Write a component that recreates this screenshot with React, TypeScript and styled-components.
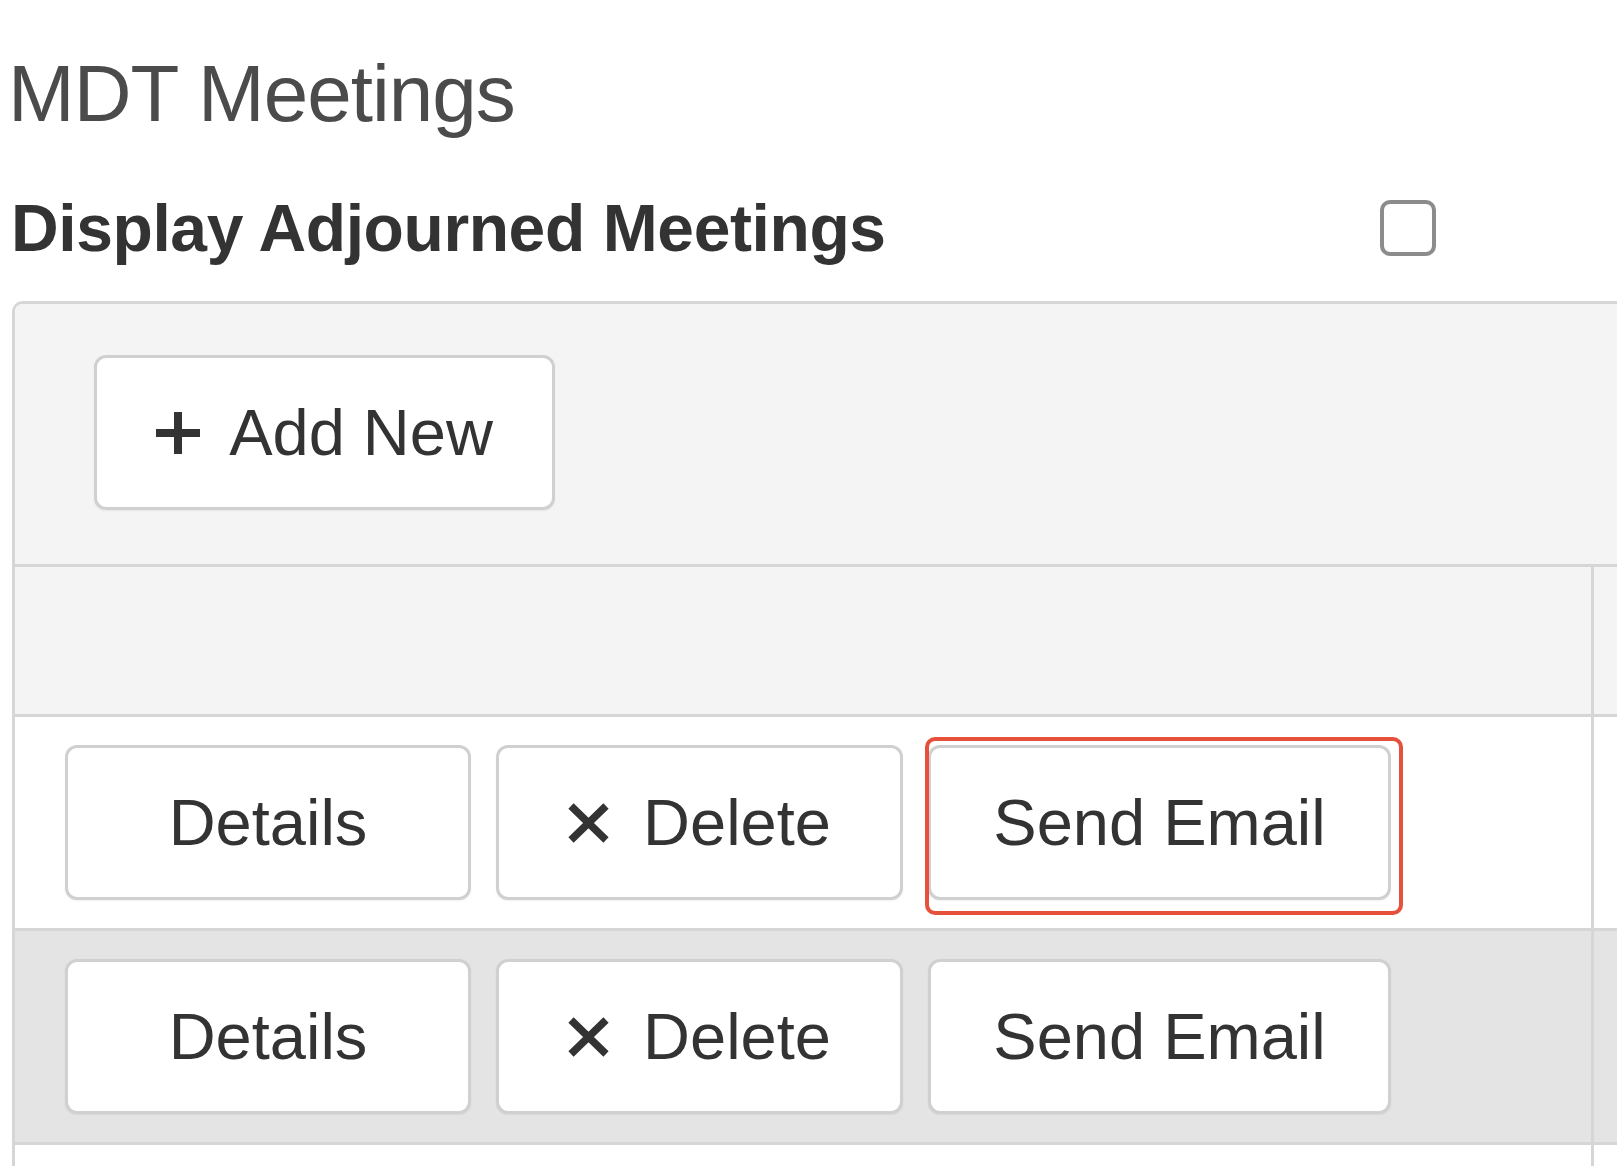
import React from 'react';
import styled, { createGlobalStyle } from 'styled-components';

const lineColor = '#d6d6d6';
const textColor = '#333333';

const GlobalStyle = createGlobalStyle`
  html, body {
    margin: 0;
    padding: 0;
    background: #ffffff;
    overflow: hidden;
  }
  body {
    font-family: "Liberation Sans", Arial, Helvetica, sans-serif;
    color: ${textColor};
  }
`;

const Page = styled.div`
  width: 1617px;
  height: 1166px;
  padding-left: 8px;
  box-sizing: border-box;
  overflow: hidden;
`;

const Title = styled.h1`
  margin: 50px 0 0;
  font-size: 80px;
  font-weight: 400;
  line-height: 88px;
  letter-spacing: -1px;
  color: #4b4b4b;
`;

const OptionRow = styled.div`
  display: grid;
  grid-template-columns: 1372px 56px;
  align-items: center;
  margin-top: 50px;
`;

const OptionLabel = styled.label`
  padding-left: 3px;
  font-size: 66px;
  font-weight: 700;
  line-height: 80px;
  letter-spacing: -0.4px;
  color: ${textColor};
`;

const CheckBox = styled.input`
  appearance: none;
  margin: 0;
  width: 56px;
  height: 56px;
  box-sizing: border-box;
  border: 4px solid #8c8c8c;
  border-radius: 10px;
  background: #ffffff;
`;

const Panel = styled.div`
  margin: 33px 0 0 4px;
  width: 1700px;
  border: 3px solid ${lineColor};
  border-bottom: none;
  border-radius: 11px 11px 0 0;
  overflow: hidden;
`;

const PanelHeading = styled.div`
  display: flex;
  padding: 51px 0 54px 79px;
  background: #f4f4f4;
  border-bottom: 3px solid ${lineColor};
`;

const Row = styled.div<{ $bg?: string; $height?: number }>`
  display: grid;
  grid-template-columns: 1579px 1fr;
  background: ${(p) => p.$bg || '#ffffff'};
  border-bottom: 3px solid ${lineColor};
  height: ${(p) => (p.$height ? `${p.$height}px` : 'auto')};
`;

const Cell = styled.div`
  border-right: 3px solid ${lineColor};
`;

const ActionCell = styled(Cell)`
  display: flex;
  gap: 25px;
  padding: 28px 0 28px 50px;
`;

const Button = styled.button<{ $width: number }>`
  display: inline-flex;
  align-items: center;
  justify-content: center;
  box-sizing: border-box;
  width: ${(p) => p.$width}px;
  height: 155px;
  padding: 0;
  background: #ffffff;
  border: 3px solid #d0d0d0;
  border-radius: 12px;
  box-shadow: 0 1px 2px rgba(0, 0, 0, 0.06);
  font-family: "Liberation Sans", Arial, Helvetica, sans-serif;
  font-size: 65px;
  line-height: 1;
  color: ${textColor};
  cursor: pointer;
`;

const IconBox = styled.svg<{ $gap: number }>`
  flex: none;
  margin-right: ${(p) => p.$gap}px;
`;

const Highlighted = styled.span`
  position: relative;
  display: inline-flex;
`;

const HighlightRing = styled.span`
  position: absolute;
  left: -3px;
  top: -8px;
  right: -12px;
  bottom: -15px;
  border: 4px solid #e6513c;
  border-radius: 10px;
  pointer-events: none;
`;

const PlusIcon = () => (
  <IconBox $gap={29} width="44" height="42" viewBox="0 0 44 42">
    <path d="M22 0 V42 M0 21 H44" stroke="#333" strokeWidth="8" fill="none" />
  </IconBox>
);

const CrossIcon = () => (
  <IconBox $gap={34} width="41" height="40" viewBox="0 0 41 40">
    <path d="M3 3 L38 37 M38 3 L3 37" stroke="#333" strokeWidth="7.5" fill="none" />
  </IconBox>
);

type MeetingRowProps = { bg?: string; highlight?: boolean };

const MeetingRow: React.FC<MeetingRowProps> = ({ bg, highlight }) => {
  const send = <Button $width={463}>Send Email</Button>;
  return (
    <Row $bg={bg}>
      <ActionCell>
        <Button $width={406}>Details</Button>
        <Button $width={407}>
          <CrossIcon />
          Delete
        </Button>
        {highlight ? (
          <Highlighted>
            {send}
            <HighlightRing />
          </Highlighted>
        ) : (
          send
        )}
      </ActionCell>
      <Cell />
    </Row>
  );
};

export default function App() {
  return (
    <>
      <GlobalStyle />
      <Page>
        <Title>MDT Meetings</Title>
        <OptionRow>
          <OptionLabel htmlFor="adjourned">Display Adjourned Meetings</OptionLabel>
          <CheckBox id="adjourned" type="checkbox" />
        </OptionRow>
        <Panel>
          <PanelHeading>
            <Button $width={461}>
              <PlusIcon />
              Add New
            </Button>
          </PanelHeading>
          <Row $bg="#f4f4f4" $height={147}>
            <Cell />
            <Cell />
          </Row>
          <MeetingRow highlight />
          <MeetingRow bg="#e4e4e4" />
          <Row $height={200}>
            <Cell />
            <Cell />
          </Row>
        </Panel>
      </Page>
    </>
  );
}
